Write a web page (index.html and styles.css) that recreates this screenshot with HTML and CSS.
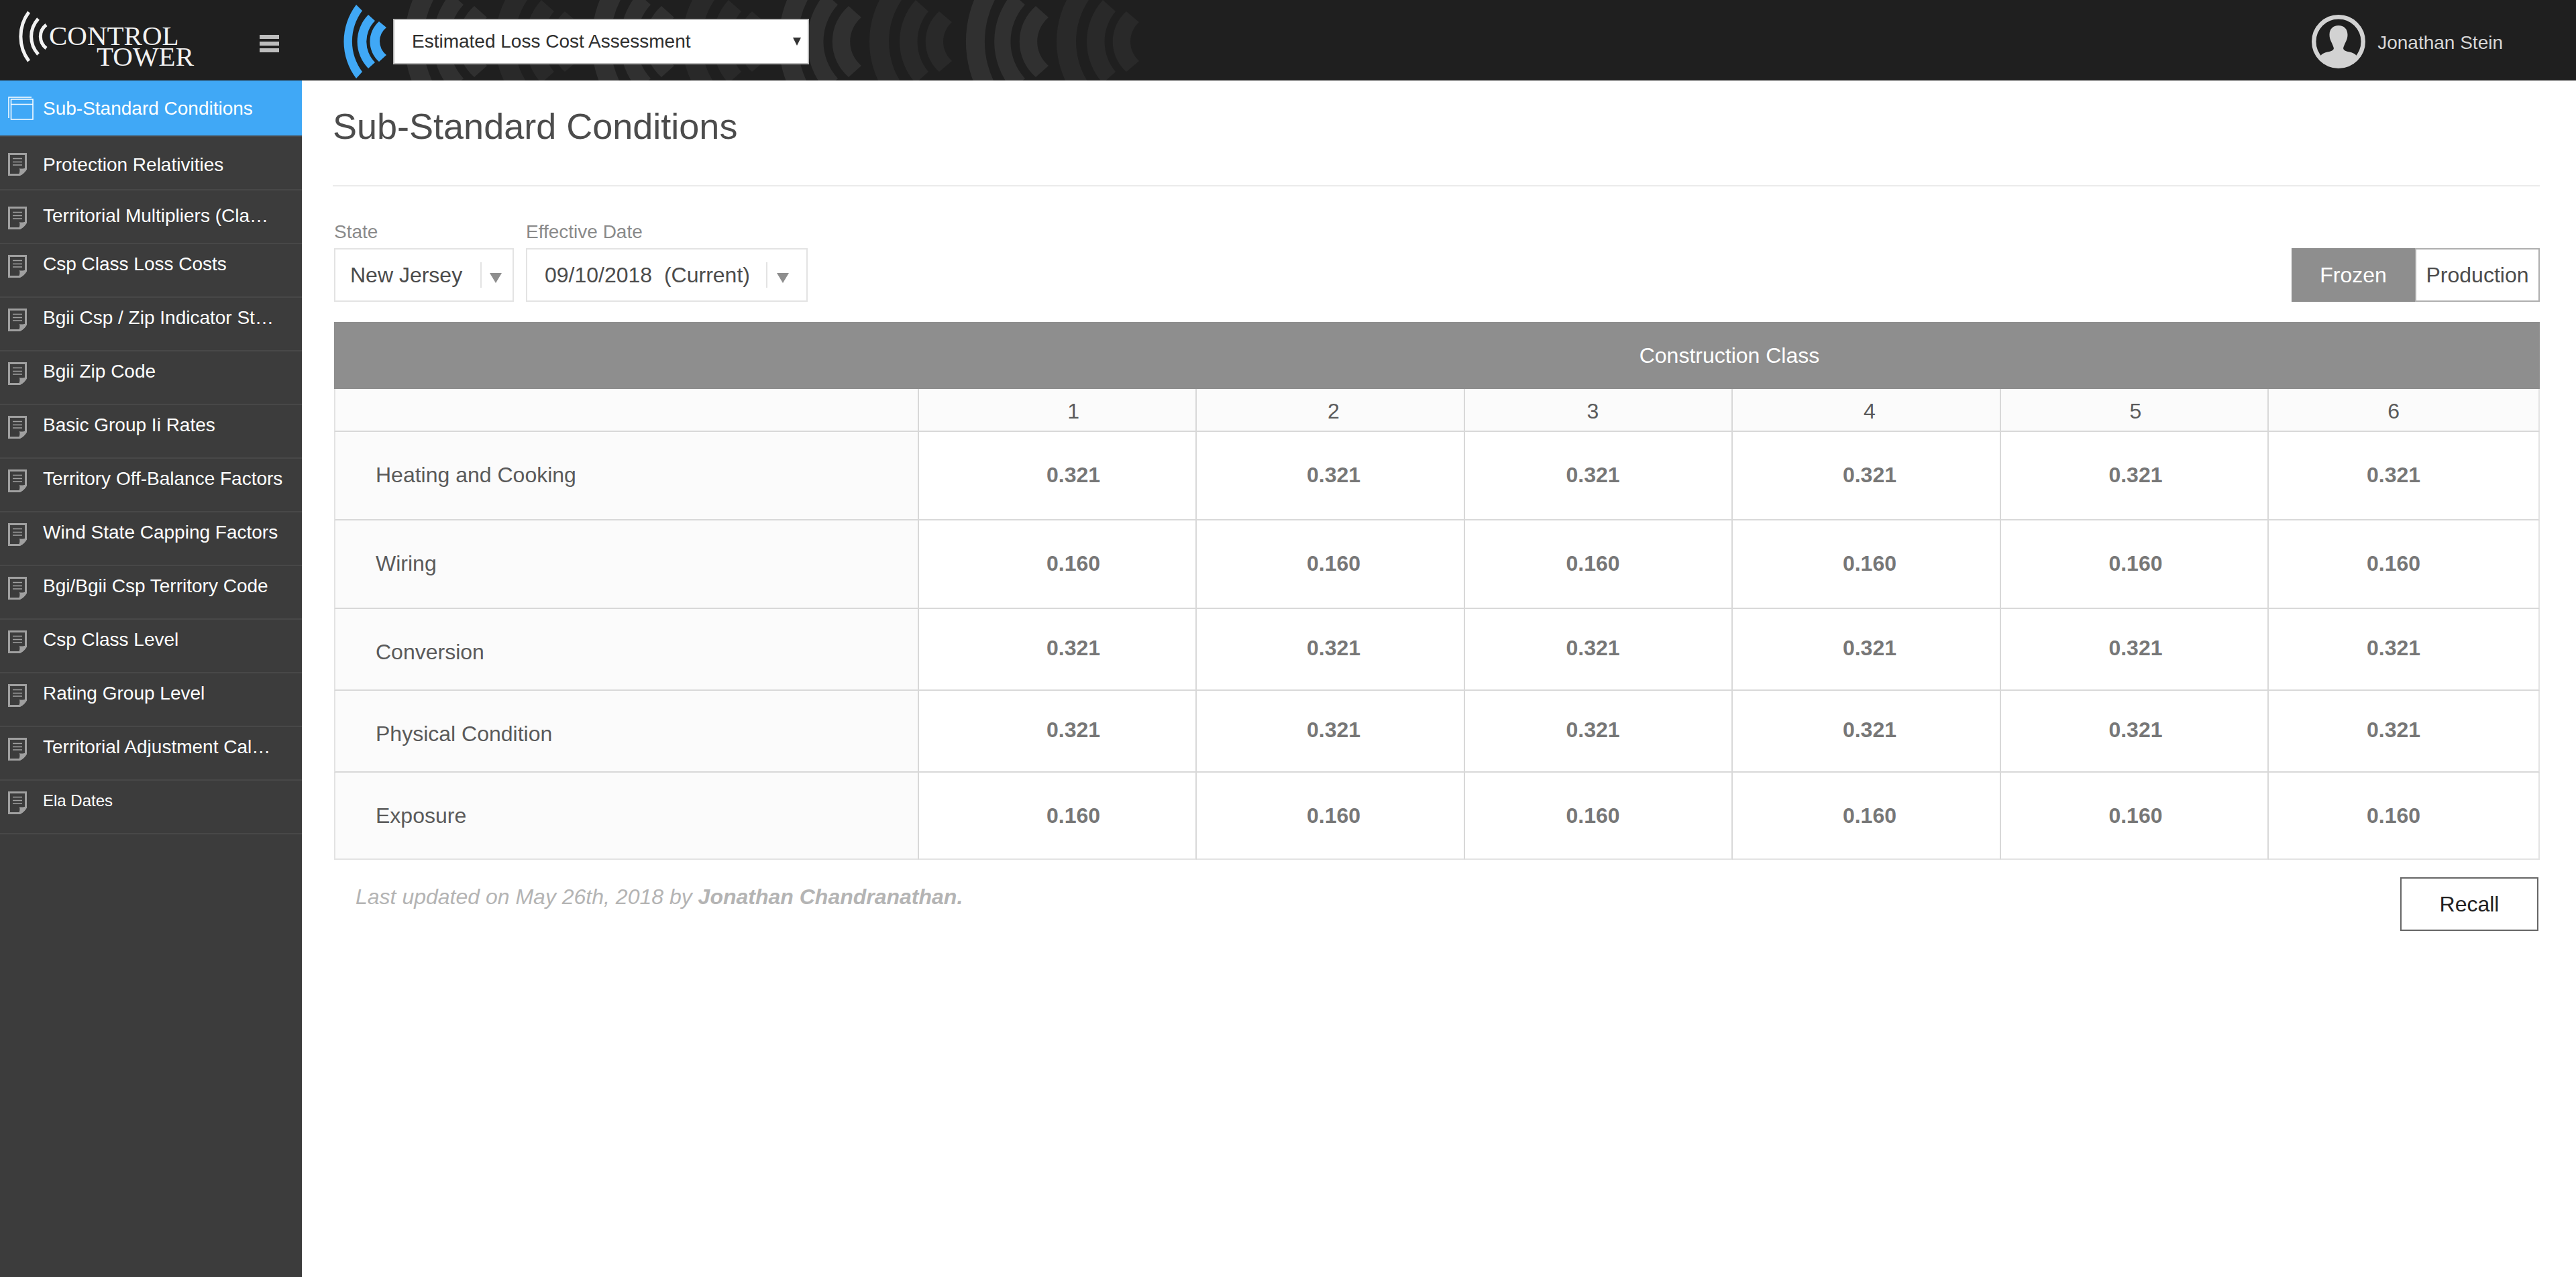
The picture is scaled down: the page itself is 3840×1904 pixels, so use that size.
FILE: index.html
```html
<!DOCTYPE html>
<html lang="en">
<head>
  <meta charset="utf-8">
  <meta name="viewport" content="width=device-width, initial-scale=1">
  <title>Sub-Standard Conditions - Control Tower</title>
  <link rel="stylesheet" href="styles.css">
</head>
<body>
  <svg class="sprite" aria-hidden="true">
    <symbol id="icon-page" viewBox="0 0 28 34">
      <path d="M1.5 1.5H26.5V24C24 28 21 31 17 32.5H1.5Z" fill="none" stroke="#a0a0a0" stroke-width="3"/>
      <path d="M17 23C20 24 24 23.500 28 22V24C26 28 21 33 17 34H14C17 32 18 28 17 23Z" fill="#a0a0a0"/>
      <path d="M7 8.500H21M7 13.500H21M7 18H21" stroke="#a0a0a0" stroke-width="1.500"/>
    </symbol>
    <symbol id="wave-light" viewBox="0 0 126 120" overflow="visible">
      <path d="M26 -22A164 164 0 0 0 26 146L48 128A136 136 0 0 1 48 -4Z"/>
      <path d="M72 -10A110 110 0 0 0 72 134L91 117A81 81 0 0 1 91 7Z"/>
      <path d="M107 9A70 70 0 0 0 107 115L126 98A47 47 0 0 1 126 26Z"/>
    </symbol>
    <symbol id="wave-dark" viewBox="0 0 122 120" overflow="visible">
      <path d="M24 -18A136 136 0 0 0 24 142L46 124A111 111 0 0 1 46 0Z"/>
      <path d="M67 0A92 92 0 0 0 67 124L86 107A70 70 0 0 1 86 17Z"/>
      <path d="M102 17A60 60 0 0 0 102 107L121 91A39 39 0 0 1 121 33Z"/>
    </symbol>
  </svg>

  <header class="topbar">
    <svg class="topbar-waves" viewBox="600 0 1100 120" aria-hidden="true">
      <g fill="#303030">
        <use href="#wave-light" x="600" y="0" width="126" height="120"/>
        <use href="#wave-light" x="879" y="0" width="126" height="120"/>
        <use href="#wave-light" x="1158" y="0" width="126" height="120"/>
        <use href="#wave-light" x="1437" y="0" width="126" height="120"/>
      </g>
      <g fill="#292929">
        <use href="#wave-dark" x="740" y="0" width="122" height="120"/>
        <use href="#wave-dark" x="1019" y="0" width="122" height="120"/>
        <use href="#wave-dark" x="1298" y="0" width="122" height="120"/>
        <use href="#wave-dark" x="1577" y="0" width="122" height="120"/>
      </g>
    </svg>
    <div class="brand">
      <a class="logo" href="#">
        <svg class="logo-mark" viewBox="0 0 46 80" aria-hidden="true">
          <g fill="none" stroke="#f2f2f2" stroke-width="5">
            <path d="M16 4A61 61 0 0 0 16 77"/>
            <path d="M30 14A39 39 0 0 0 30 67"/>
            <path d="M42 23A22 22 0 0 0 42 58"/>
          </g>
        </svg>
        <span class="logo-name"><span>CONTROL</span><span class="logo-second">TOWER</span></span>
      </a>
      <button class="menu-button" type="button" aria-label="Toggle menu">
        <span></span><span></span><span></span>
      </button>
    </div>
    <svg class="app-mark" viewBox="512 0 64 120" aria-hidden="true">
      <g fill="#40a8f6">
        <path d="M531 7A91 91 0 0 0 531 117L540 107A76 76 0 0 1 540 16Z"/>
        <path d="M549 22A57 57 0 0 0 549 102L559 93A44 44 0 0 1 559 31Z"/>
        <path d="M565 32A40 40 0 0 0 565 92L576 82A26 26 0 0 1 576 41Z"/>
      </g>
    </svg>
    <div class="picker picker-app">
      <select aria-label="Application">
        <option>Estimated Loss Cost Assessment</option>
      </select>
      <svg class="picker-arrow" viewBox="0 0 12 12" aria-hidden="true"><path d="M0 0H12L6 12Z" fill="#333"/></svg>
    </div>
    <a class="user" href="#">
      <svg class="avatar" viewBox="0 0 80 80" aria-hidden="true">
        <circle cx="40" cy="40" r="36.750" fill="none" stroke="#d2d2d2" stroke-width="6.500"/>
        <path d="M40 16C48 16 53.500 21 53.500 30C53.500 38 49 42 47 50C48 56 58 54 65 59L67 62C62 70 52 77 40 77C28 77 18 70 13 62L15 59C22 54 32 56 33 50C31 42 26.500 38 26.500 30C26.500 21 32 16 40 16Z" fill="#d2d2d2"/>
      </svg>
      <span class="user-name">Jonathan Stein</span>
    </a>
  </header>

  <div class="shell">
    <nav class="sidebar" aria-label="Sections">
      <ul class="nav-list">
        <li><a class="nav-item nav-lead nav-active" href="#" aria-current="page">
          <svg class="nav-icon-active" viewBox="0 0 38 35" aria-hidden="true"><path d="M1 32V1H35M4.500 4H37V34H4.500ZM4.500 11.500H37" fill="none" stroke="#fff" stroke-width="1.500"/></svg>
          <span>Sub-Standard Conditions</span></a></li>
        <li><a class="nav-item nav-lead" href="#"><svg class="nav-icon" aria-hidden="true"><use href="#icon-page"/></svg><span>Protection Relativities</span></a></li>
        <li><a class="nav-item nav-middle" href="#"><svg class="nav-icon" aria-hidden="true"><use href="#icon-page"/></svg><span>Territorial Multipliers (Cla…</span></a></li>
        <li><a class="nav-item" href="#"><svg class="nav-icon" aria-hidden="true"><use href="#icon-page"/></svg><span>Csp Class Loss Costs</span></a></li>
        <li><a class="nav-item" href="#"><svg class="nav-icon" aria-hidden="true"><use href="#icon-page"/></svg><span>Bgii Csp / Zip Indicator St…</span></a></li>
        <li><a class="nav-item" href="#"><svg class="nav-icon" aria-hidden="true"><use href="#icon-page"/></svg><span>Bgii Zip Code</span></a></li>
        <li><a class="nav-item" href="#"><svg class="nav-icon" aria-hidden="true"><use href="#icon-page"/></svg><span>Basic Group Ii Rates</span></a></li>
        <li><a class="nav-item" href="#"><svg class="nav-icon" aria-hidden="true"><use href="#icon-page"/></svg><span>Territory Off-Balance Factors</span></a></li>
        <li><a class="nav-item" href="#"><svg class="nav-icon" aria-hidden="true"><use href="#icon-page"/></svg><span>Wind State Capping Factors</span></a></li>
        <li><a class="nav-item" href="#"><svg class="nav-icon" aria-hidden="true"><use href="#icon-page"/></svg><span>Bgi/Bgii Csp Territory Code</span></a></li>
        <li><a class="nav-item" href="#"><svg class="nav-icon" aria-hidden="true"><use href="#icon-page"/></svg><span>Csp Class Level</span></a></li>
        <li><a class="nav-item" href="#"><svg class="nav-icon" aria-hidden="true"><use href="#icon-page"/></svg><span>Rating Group Level</span></a></li>
        <li><a class="nav-item" href="#"><svg class="nav-icon" aria-hidden="true"><use href="#icon-page"/></svg><span>Territorial Adjustment Cal…</span></a></li>
        <li><a class="nav-item nav-small" href="#"><svg class="nav-icon" aria-hidden="true"><use href="#icon-page"/></svg><span>Ela Dates</span></a></li>
      </ul>
    </nav>

    <main class="main">
      <h1 class="page-title">Sub-Standard Conditions</h1>
      <div class="content">
        <div class="toolbar">
          <div class="field field-state">
            <label for="state">State</label>
            <div class="picker picker-field">
              <select id="state"><option>New Jersey</option></select>
              <span class="picker-rule"></span>
              <svg class="picker-arrow" viewBox="0 0 18 15" aria-hidden="true"><path d="M0 0H18L9 15Z" fill="#8e8e8e"/></svg>
            </div>
          </div>
          <div class="field field-date">
            <label for="effective-date">Effective Date</label>
            <div class="picker picker-field picker-wide">
              <select id="effective-date"><option>09/10/2018&nbsp; (Current)</option></select>
              <span class="picker-rule"></span>
              <svg class="picker-arrow" viewBox="0 0 18 15" aria-hidden="true"><path d="M0 0H18L9 15Z" fill="#8e8e8e"/></svg>
            </div>
          </div>
          <div class="toggle" role="group" aria-label="Version">
            <button class="toggle-button toggle-on" type="button" aria-pressed="true">Frozen</button>
            <button class="toggle-button" type="button" aria-pressed="false">Production</button>
          </div>
        </div>

        <table class="rates">
          <colgroup>
            <col class="col-label"><col class="col-first"><col class="col-class" span="4"><col>
          </colgroup>
          <thead>
            <tr class="group-row"><td></td><th colspan="6" scope="colgroup">Construction Class</th></tr>
            <tr class="class-row"><td></td><th scope="col">1</th><th scope="col">2</th><th scope="col">3</th><th scope="col">4</th><th scope="col">5</th><th scope="col">6</th></tr>
          </thead>
          <tbody>
            <tr class="tall"><th scope="row">Heating and Cooking</th><td>0.321</td><td>0.321</td><td>0.321</td><td>0.321</td><td>0.321</td><td>0.321</td></tr>
            <tr class="tall"><th scope="row">Wiring</th><td>0.160</td><td>0.160</td><td>0.160</td><td>0.160</td><td>0.160</td><td>0.160</td></tr>
            <tr><th scope="row">Conversion</th><td>0.321</td><td>0.321</td><td>0.321</td><td>0.321</td><td>0.321</td><td>0.321</td></tr>
            <tr><th scope="row">Physical Condition</th><td>0.321</td><td>0.321</td><td>0.321</td><td>0.321</td><td>0.321</td><td>0.321</td></tr>
            <tr class="tall"><th scope="row">Exposure</th><td>0.160</td><td>0.160</td><td>0.160</td><td>0.160</td><td>0.160</td><td>0.160</td></tr>
          </tbody>
        </table>

        <footer class="table-footer">
          <p>Last updated on May 26th, 2018 by <strong>Jonathan Chandranathan.</strong></p>
          <button class="recall" type="button">Recall</button>
        </footer>
      </div>
    </main>
  </div>
</body>
</html>
```

FILE: styles.css
```css
* {
  box-sizing: border-box;
}

body {
  margin: 0;
  min-height: 100vh;
  display: flex;
  flex-direction: column;
  background: #fff;
  color: #4c4c4c;
  font-family: "Liberation Sans", Arial, sans-serif;
  font-size: 32px;
  line-height: 40px;
}

button,
select {
  margin: 0;
  border: 0;
  border-radius: 0;
  background: none;
  color: inherit;
  font: inherit;
  cursor: pointer;
}

a {
  color: inherit;
  text-decoration: none;
}

svg {
  display: block;
}

.sprite {
  position: absolute;
  width: 0;
  height: 0;
}

/* Top bar */

.topbar {
  position: relative;
  display: flex;
  align-items: center;
  height: 120px;
  overflow: hidden;
  background: #1f1f1f;
}

/* decoration behind the controls */
.topbar-waves {
  position: absolute;
  top: 0;
  left: 600px;
  width: 1100px;
  height: 120px;
}

.brand {
  flex: none;
  display: flex;
  align-items: flex-start;
  justify-content: space-between;
  width: 450px;
  height: 120px;
  padding: 14px 34px 0 27px;
}

.logo {
  display: flex;
  color: #f2f2f2;
  font-family: "Liberation Serif", "Times New Roman", serif;
  font-size: 41px;
  line-height: 31px;
}

.logo-mark {
  width: 46px;
  height: 80px;
}

.logo-name {
  display: flex;
  flex-direction: column;
  width: 216px;
  padding-top: 24px;
}

.logo-second {
  text-align: right;
}

.menu-button {
  display: flex;
  flex-direction: column;
  gap: 4px;
  width: 29px;
  margin-top: 38px;
  padding: 0;
}

.menu-button span {
  height: 6px;
  background: #bdbdbd;
}

.app-mark {
  flex: none;
  width: 64px;
  height: 120px;
  margin: 0 10px 0 62px;
}

.user {
  position: relative;
  display: flex;
  align-items: center;
  gap: 18px;
  margin: 4px 109px 0 auto;
  color: #d6d6d6;
  font-size: 28px;
  line-height: 36px;
}

.user-name {
  padding-top: 4px;
}

.avatar {
  width: 80px;
  height: 80px;
}

/* Drop-downs: the arrow lies over the select's right end */

.picker {
  position: relative;
  display: grid;
  align-items: center;
}

.picker select {
  appearance: none;
  grid-area: 1 / 1;
  width: 100%;
  height: 100%;
}

.picker-arrow,
.picker-rule {
  grid-area: 1 / 1;
  justify-self: end;
  pointer-events: none;
}

.picker-app {
  width: 620px;
  height: 68px;
  margin-top: 4px;
  font-size: 28px;
}

.picker-app select {
  padding: 0 40px 0 26px;
  border: 2px solid #b8b8b8;
  background: #fff;
  color: #2f2f2f;
}

.picker-app .picker-arrow {
  width: 12px;
  height: 12px;
  margin-right: 12px;
}

.picker-field {
  height: 80px;
}

.picker-field select {
  padding: 0 50px 0 22px;
  border: 2px solid #e3e3e3;
}

.picker-field .picker-rule {
  width: 2px;
  height: 38px;
  margin-right: 48px;
  background: #e3e3e3;
}

.picker-field .picker-arrow {
  width: 18px;
  height: 15px;
  margin: 8px 18px 0 0;
}

.picker-wide select {
  padding-left: 26px;
}

.picker-wide .picker-rule {
  margin-right: 60px;
}

.picker-wide .picker-arrow {
  margin-right: 28px;
}

/* Sidebar */

.shell {
  flex: 1;
  display: flex;
}

.sidebar {
  flex: none;
  width: 450px;
  background: #3c3c3c;
}

.nav-list {
  margin: 0;
  padding: 0;
  list-style: none;
}

.nav-item {
  display: flex;
  align-items: flex-start;
  height: 80px;
  padding: 12px 12px 0;
  border-bottom: 2px solid #484848;
  color: #fff;
  font-size: 28px;
  line-height: 36px;
  white-space: nowrap;
}

.nav-icon {
  flex: none;
  width: 28px;
  height: 34px;
  margin: 4px 24px 0 0;
}

.nav-icon-active {
  flex: none;
  width: 38px;
  height: 35px;
  margin-right: 14px;
}

.nav-lead {
  padding-top: 24px;
}

.nav-lead .nav-icon {
  margin-top: 0;
}

.nav-middle {
  padding-top: 20px;
}

.nav-active {
  height: 84px;
  background: #40a8f6;
  background-clip: padding-box;
}

.nav-small {
  font-size: 24px;
}

/* Main area */

.main {
  flex: 1;
  min-width: 0;
  padding: 36px 54px 48px 46px;
}

.page-title {
  margin: 0;
  padding-bottom: 56px;
  border-bottom: 2px solid #ebebeb;
  font-size: 54px;
  font-weight: 400;
  line-height: 64px;
}

.content {
  padding: 50px 0 0 2px;
}

.toolbar {
  display: flex;
  align-items: flex-end;
  gap: 18px;
  margin-bottom: 30px;
}

.field {
  display: flex;
  flex-direction: column;
  gap: 6px;
}

.field label {
  color: #8a8a8a;
  font-size: 28px;
  line-height: 36px;
}

.field-state {
  width: 268px;
}

.field-date {
  width: 420px;
}

.toggle {
  display: flex;
  margin-left: auto;
}

.toggle-button {
  width: 186px;
  height: 80px;
  padding: 0;
  border: 2px solid #aeaeae;
}

.toggle-on {
  width: 184px;
  border-color: #8e8e8e;
  background: #8e8e8e;
  color: #fff;
}

/* Rates table */

.rates {
  width: 100%;
  table-layout: fixed;
  border-spacing: 0;
}

.col-label {
  width: 26.52%;
}

.col-first {
  width: 12.6%;
}

.col-class {
  width: 12.15%;
}

.rates th,
.rates td {
  padding: 0;
  border-right: 2px solid #d8d8d8;
  border-bottom: 2px solid #d8d8d8;
  font-weight: 400;
  text-align: center;
}

.rates .group-row td,
.rates .group-row th {
  height: 100px;
  border: 0;
  background: #8e8e8e;
  color: #fff;
}

.rates .class-row td,
.rates .class-row th {
  height: 64px;
  padding-top: 4px;
  background: #fbfbfb;
  color: #5a5a5a;
}

.rates tbody th,
.rates tbody td {
  height: 122px;
  vertical-align: top;
}

.rates .tall th,
.rates .tall td {
  height: 132px;
}

.rates tbody th {
  padding: 44px 20px 0 60px;
  background: #fbfbfb;
  color: #5a5a5a;
  text-align: left;
}

.rates tbody td {
  padding-top: 38px;
  color: #777;
  font-weight: 700;
}

.rates .tall td {
  padding-top: 44px;
}

.rates tr:not(.group-row) > :first-child {
  border-left: 2px solid #e3e3e3;
}

.rates tr:not(.group-row) > :last-child {
  border-right-color: #e3e3e3;
}

.rates tbody tr:last-child > * {
  height: 130px;
  border-bottom-color: #e3e3e3;
}

/* figures sit off-centre in the outer and middle columns */
.rates tr:not(.group-row) > :nth-child(2) {
  padding-left: 48px;
}

.rates tr:not(.group-row) > :nth-child(3) {
  padding-left: 10px;
}

.rates tr:not(.group-row) > :nth-child(4) {
  padding-right: 16px;
}

.rates tr:not(.group-row) > :nth-child(5) {
  padding-left: 10px;
}

.rates tr:not(.group-row) > :nth-child(6) {
  padding-left: 4px;
}

.rates tr:not(.group-row) > :nth-child(7) {
  padding-right: 30px;
}

.table-footer {
  display: flex;
  align-items: flex-start;
  justify-content: space-between;
  padding: 26px 2px 0 32px;
}

.table-footer p {
  margin: 9px 0 0;
  color: #b4b4b4;
  font-style: italic;
}

.recall {
  width: 206px;
  height: 80px;
  border: 2px solid #666;
  color: #222;
}
```
